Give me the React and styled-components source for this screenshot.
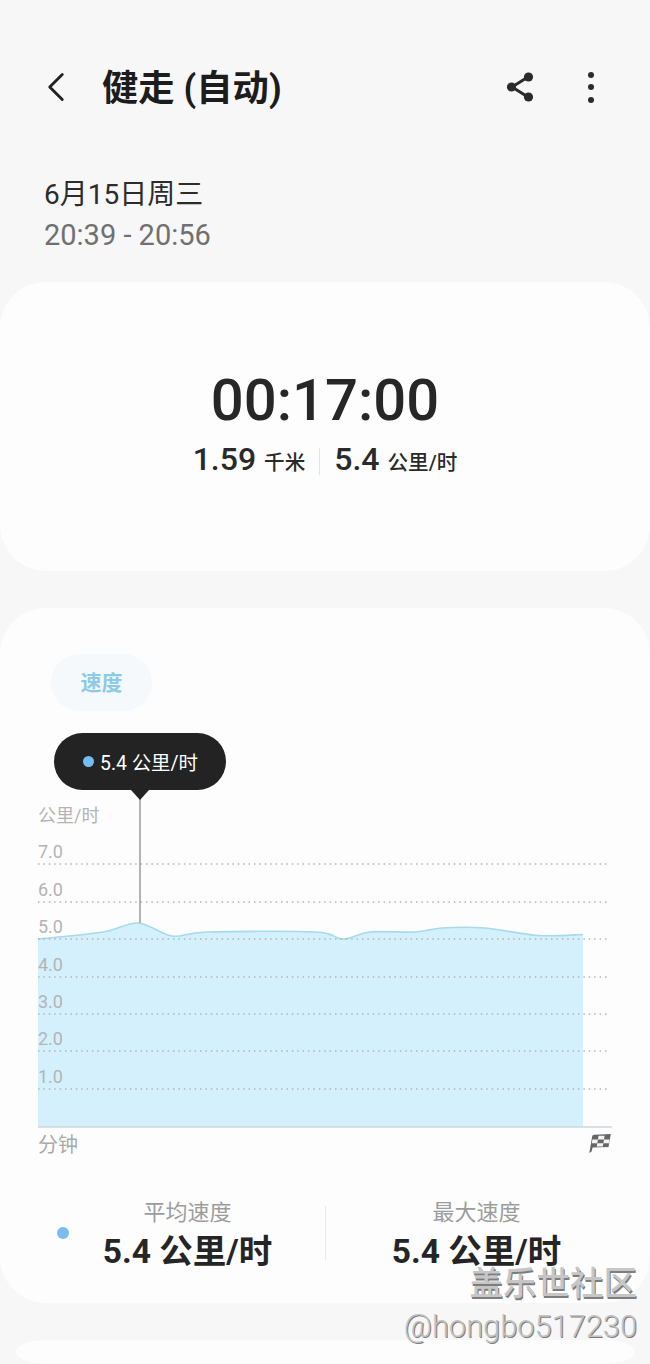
import styled, { createGlobalStyle } from 'styled-components'
import { ChevronLeft } from 'lucide-react'

const points = [
    [38, 939], [103, 932], [138, 923], [172, 936], [207, 932], [315, 932], [343, 939],
    [370, 932], [415, 932], [442, 928], [485, 928], [538, 935.5], [583, 934.5],
]
const gridLines = [
    { y: 864, label: '7.0' },
    { y: 902, label: '6.0' },
    { y: 939, label: '5.0' },
    { y: 977, label: '4.0' },
    { y: 1014, label: '3.0' },
    { y: 1051, label: '2.0' },
    { y: 1089, label: '1.0' },
]

// catmull-rom through the points, the line has no hard corners in the picture
const curve = points.reduce((d, [x, y], i) => {
    if (i === 0) return `M${x} ${y}`
    const p0 = points[Math.max(i - 2, 0)]
    const p1 = points[i - 1]
    const p3 = points[Math.min(i + 1, points.length - 1)]
    const c1x = p1[0] + (x - p0[0]) / 6
    const c1y = p1[1] + (y - p0[1]) / 6
    const c2x = x - (p3[0] - p1[0]) / 6
    const c2y = y - (p3[1] - p1[1]) / 6
    return `${d} C${c1x} ${c1y} ${c2x} ${c2y} ${x} ${y}`
}, '')

function ShareIcon() {
    return (
        <svg width="30" height="32" viewBox="0 0 30 32">
            <path d="M23 6 L7 16 L23 26" fill="none" stroke="#2b2b2b" strokeWidth="3" />
            <circle cx="23.5" cy="6" r="4.6" fill="#2b2b2b" />
            <circle cx="6.5" cy="16" r="4.6" fill="#2b2b2b" />
            <circle cx="23.5" cy="26" r="4.6" fill="#2b2b2b" />
        </svg>
    )
}

function FlagIcon() {
    return (
        <svg width="22" height="19" viewBox="0 0 22 19">
            <path d="M0.3 19 L3.2 2.2 Q3.5 0.9 5 0.8 L21.8 0 L19.5 13 L3.6 13.6 L2.6 17.5 Z" fill="#666" />
            <path d="M9.5 1.8 H15.6 L15 5.4 H8.9 Z M3.4 5.4 H8.9 L8.3 9.2 H2.8 Z M15 5.4 H20.6 L20 9.2 H14.4 Z M8.3 9.2 H14.4 L13.8 12.6 H7.7 Z" fill="#f4f4f4" />
        </svg>
    )
}

function App() {
    return (
        <Page>
            <GlobalStyle />
            <Header>
                <BackButton><ChevronLeft size={50} strokeWidth={1.4} /></BackButton>
                <Title>健走 (自动)</Title>
                <ShareIcon />
                <MoreButton><i /><i /><i /></MoreButton>
            </Header>

            <DateBlock>
                <DateText>6月15日周三</DateText>
                <TimeText>20:39 - 20:56</TimeText>
            </DateBlock>

            <SummaryCard>
                <Duration>00:17:00</Duration>
                <SummaryRow>
                    <SummaryItem>1.59 <small>千米</small></SummaryItem>
                    <SummaryDivider />
                    <SummaryItem>5.4 <small>公里/时</small></SummaryItem>
                </SummaryRow>
            </SummaryCard>

            <ChartCard>
                <Pill>速度</Pill>
                <ChartArea>
                    <Tooltip>
                        <TooltipDot />
                        5.4 公里/时
                    </Tooltip>
                    <svg width="574" height="395" viewBox="38 733 574 395">
                        <path d={`${curve} L583 1127 L38 1127 Z`} fill="#d3f0fc" />
                        <path d={curve} fill="none" stroke="#a6dbe9" strokeWidth="1.6" />
                        {gridLines.map(line => (
                            <line key={line.y} x1="38" x2="610" y1={line.y} y2={line.y}
                                stroke="#b4b4b4" strokeWidth="1.5" strokeDasharray="1.5 3.9" />
                        ))}
                        {gridLines.map(line => (
                            <AxisText key={line.label} x="38" y={line.y - 6}>{line.label}</AxisText>
                        ))}
                        <AxisText x="38" y="822">公里/时</AxisText>
                        <line x1="140" x2="140" y1="798" y2="923" stroke="#9a9a9a" strokeWidth="1.5" />
                        <line x1="38" x2="612" y1="1127" y2="1127" stroke="#cfd6da" strokeWidth="1.5" />
                    </svg>
                </ChartArea>
                <ChartFooter>
                    <span>分钟</span>
                    <FlagIcon />
                </ChartFooter>
                <StatsRow>
                    <LegendDot />
                    <Stat>
                        <StatLabel>平均速度</StatLabel>
                        <StatValue>5.4 公里/时</StatValue>
                    </Stat>
                    <StatDivider />
                    <Stat>
                        <StatLabel>最大速度</StatLabel>
                        <StatValue>5.4 公里/时</StatValue>
                    </Stat>
                </StatsRow>
            </ChartCard>

            <NextCard />

            <Watermark>
                <strong>盖乐世社区</strong>
                <span>@hongbo517230</span>
            </Watermark>
        </Page>
    )
}

const GlobalStyle = createGlobalStyle`
    body{
        margin: 0;
        background-color: #f7f7f7;
        font-family: Roboto, "Noto Sans CJK SC", sans-serif;
    }
`

const Page = styled.div`
    position: relative;
    width: 650px;
    height: 1364px;
    overflow: hidden;
    background-color: #f7f7f7;
    color: #252525;
`

const Header = styled.header`
    display: flex;
    align-items: center;
    height: 76px;
    margin-top: 49px;
    padding: 0 56px 0 31px;
`

const BackButton = styled.div`
    display: flex;
    width: 71px;
    color: #222;
`

const Title = styled.h1`
    flex: 1;
    margin: 0;
    padding-bottom: 4px;
    font-size: 36.3px;
    font-weight: 700;
    color: #1c1c1c;
`

const MoreButton = styled.div`
    display: flex;
    flex-direction: column;
    align-items: center;
    gap: 6.5px;
    margin-left: 53px;

    i{
        width: 6px;
        height: 6px;
        border-radius: 50%;
        background-color: #2b2b2b;
    }
`

const DateBlock = styled.div`
    padding: 0 44px;
    margin-top: 49px;
    height: 108px;
`

const DateText = styled.div`
    font-size: 28px;
    line-height: 41px;
    color: #2c2c2c;
`

const TimeText = styled.div`
    font-size: 29px;
    line-height: 41px;
    color: #707070;
`

const Card = styled.section`
    background-color: #fdfdfd;
    border-radius: 46px;
`

const SummaryCard = styled(Card)`
    display: flex;
    flex-direction: column;
    align-items: center;
    height: 289px;
    padding-top: 84px;
    box-sizing: border-box;
`

const Duration = styled.div`
    font-size: 58px;
    font-weight: 500;
    line-height: 68px;
    color: #272727;
`

const SummaryRow = styled.div`
    display: flex;
    align-items: center;
    gap: 14px;
    margin-top: 5px;
`

const SummaryItem = styled.div`
    font-size: 32px;
    font-weight: 500;
    line-height: 40px;
    color: #2a2a2a;

    small{
        font-size: 20.6px;
        font-weight: 500;
    }
`

const SummaryDivider = styled.div`
    width: 1px;
    height: 27px;
    background-color: #e3e3e3;
`

const ChartCard = styled(Card)`
    height: 695px;
    margin-top: 37px;
    padding-top: 46px;
    box-sizing: border-box;
`

const Pill = styled.div`
    display: flex;
    align-items: center;
    justify-content: center;
    box-sizing: border-box;
    width: 101px;
    height: 57px;
    margin-left: 51px;
    padding-bottom: 4px;
    border-radius: 29px;
    background-color: #f5f9fc;
    color: #8bcbe8;
    font-size: 21px;
    font-weight: 700;
`

const ChartArea = styled.div`
    position: relative;
    height: 395px;
    margin: 22px 0 0 38px;

    svg{
        display: block;
    }
`

const AxisText = styled.text`
    font-size: 18px;
    fill: #b4b4b4;
`

const Tooltip = styled.div`
    position: absolute;
    top: 0;
    left: 16px;
    display: flex;
    align-items: center;
    gap: 6px;
    box-sizing: border-box;
    width: 172px;
    height: 57px;
    padding-left: 29px;
    border-radius: 29px;
    background-color: #232323;
    color: #fff;
    font-size: 19.4px;

    &::after{
        content: "";
        position: absolute;
        left: 77px;
        top: 57px;
        border-style: solid;
        border-width: 10px 9px 0;
        border-color: #232323 transparent transparent;
    }
`

const TooltipDot = styled.span`
    width: 11px;
    height: 11px;
    border-radius: 50%;
    background-color: #74bcf5;
`

const ChartFooter = styled.div`
    display: flex;
    align-items: center;
    justify-content: space-between;
    height: 30px;
    padding: 0 39px 0 38px;
    font-size: 20px;
    color: #a9a9a9;
`

const StatsRow = styled.div`
    position: relative;
    display: grid;
    grid-template-columns: 275px 1px 301px;
    align-items: center;
    margin-top: 40px;
    padding-left: 50px;
`

const LegendDot = styled.span`
    position: absolute;
    left: 57px;
    top: 29px;
    width: 12px;
    height: 12px;
    border-radius: 50%;
    background-color: #7abcf2;
`

const Stat = styled.div`
    display: flex;
    flex-direction: column;
    align-items: center;
`

const StatLabel = styled.div`
    font-size: 22px;
    line-height: 30px;
    color: #9c9c9c;
`

const StatValue = styled.div`
    font-size: 33.5px;
    font-weight: 700;
    line-height: 48px;
    color: #252525;
`

const StatDivider = styled.div`
    width: 1px;
    height: 54px;
    margin-bottom: 8px;
    background-color: #e8e8e8;
`

const NextCard = styled.section`
    height: 24px;
    margin: 37px 15px 0 16px;
    border-radius: 30px / 12px;
    background-color: #fdfdfd;
`

const Watermark = styled.div`
    position: absolute;
    right: 13px;
    bottom: 19px;
    display: flex;
    flex-direction: column;
    align-items: flex-end;
    gap: 5px;

    strong{
        font-size: 33.5px;
        line-height: 40px;
        font-weight: 500;
        color: #c6c6c6;
        text-shadow: 1px 1.5px 0 #7d7d7d;
    }
    span{
        font-size: 30.8px;
        line-height: 36px;
        font-weight: 300;
        color: #c2c2c2;
        text-shadow: 1px 1px 0 #7d7d7d;
    }
`

export default App
